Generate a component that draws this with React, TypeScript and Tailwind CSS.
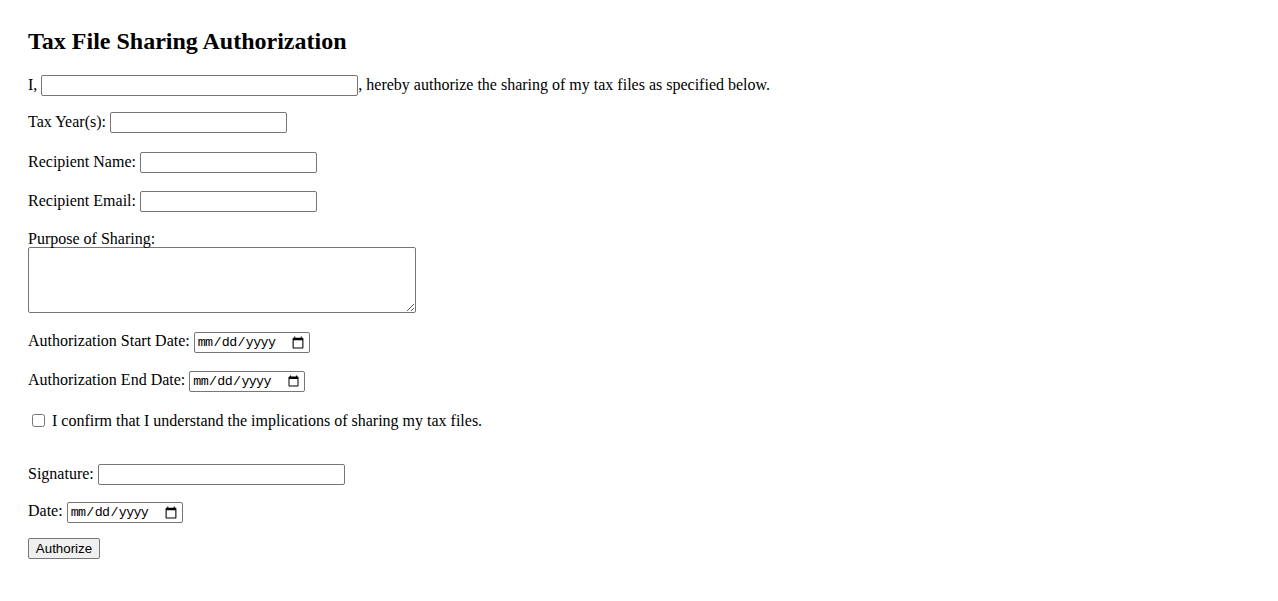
import { useState } from "react";

const field =
  "box-border h-[21px] rounded-[2px] border border-[#767676] bg-white px-[2px] py-[1px] align-baseline font-['Liberation_Sans',Arial,sans-serif] text-[13.333px] leading-[normal] text-black outline-none";

const dateField =
  "box-border h-[21px] w-[116px] rounded-[2px] border border-[#767676] bg-white px-[2px] py-[1px] align-baseline font-['Liberation_Mono','DejaVu_Sans_Mono',monospace] text-[13.333px] tracking-[-0.65px] leading-[normal] text-black outline-none";

export default function App() {
  const [confirmed, setConfirmed] = useState(false);

  return (
    <div className="min-h-screen bg-white px-[28px] pt-[27px] font-['Liberation_Serif','Times_New_Roman',serif] text-[16px] leading-[normal] text-black">
      <h2 className="text-[24px] font-bold leading-[28px]">Tax File Sharing Authorization</h2>

      <form onSubmit={(e) => e.preventDefault()}>
        <div className="mt-[20px] h-[21px]">
          I, <input type="text" className={`${field} w-[317px]`} />, hereby authorize the sharing of my tax files as
          specified below.
        </div>

        <div className="mt-[16px] h-[21px]">
          <label htmlFor="years">Tax Year(s):</label>{" "}
          <input id="years" type="text" className={`${field} w-[177px]`} />
        </div>

        <div className="mt-[19px] h-[21px]">
          <label htmlFor="rname">Recipient Name:</label>{" "}
          <input id="rname" type="text" className={`${field} w-[177px]`} />
        </div>

        <div className="mt-[18px] h-[21px]">
          <label htmlFor="remail">Recipient Email:</label>{" "}
          <input id="remail" type="email" className={`${field} w-[177px]`} />
        </div>

        <div className="mt-[18px]">
          <label htmlFor="purpose" className="block h-[16px] leading-[18px]">
            Purpose of Sharing:
          </label>
          <textarea
            id="purpose"
            className="mt-px box-border block h-[66px] w-[388px] rounded-[2px] border border-[#767676] bg-white px-[2px] py-[2px] font-['Liberation_Mono',monospace] text-[13.333px] outline-none"
          />
        </div>

        <div className="mt-[19px] h-[21px]">
          <label htmlFor="start">Authorization Start Date:</label>{" "}
          <input id="start" type="date" className={dateField} />
        </div>

        <div className="mt-[18px] h-[21px]">
          <label htmlFor="end">Authorization End Date:</label>{" "}
          <input id="end" type="date" className={dateField} />
        </div>

        <div className="mt-[19px] flex h-[19px] items-start">
          <input
            id="confirm"
            type="checkbox"
            checked={confirmed}
            onChange={(e) => setConfirmed(e.target.checked)}
            className="mt-[3px] ml-[4px] mr-[7px] h-[13px] w-[13px]"
          />
          <label htmlFor="confirm" className="mt-px">
            I confirm that I understand the implications of sharing my tax files.
          </label>
        </div>

        <div className="mt-[34px] h-[21px]">
          <label htmlFor="sig">Signature:</label>{" "}
          <input id="sig" type="text" className={`${field} w-[247px]`} />
        </div>

        <div className="mt-[17px] h-[21px]">
          <label htmlFor="date">Date:</label> <input id="date" type="date" className={dateField} />
        </div>

        <button
          type="submit"
          className="mt-[15px] box-border h-[21px] w-[72px] rounded-[2px] border border-[#767676] bg-[#efefef] px-[6px] font-['Liberation_Sans',Arial,sans-serif] text-[13.333px] leading-[normal] text-black"
        >
          Authorize
        </button>
      </form>
    </div>
  );
}
